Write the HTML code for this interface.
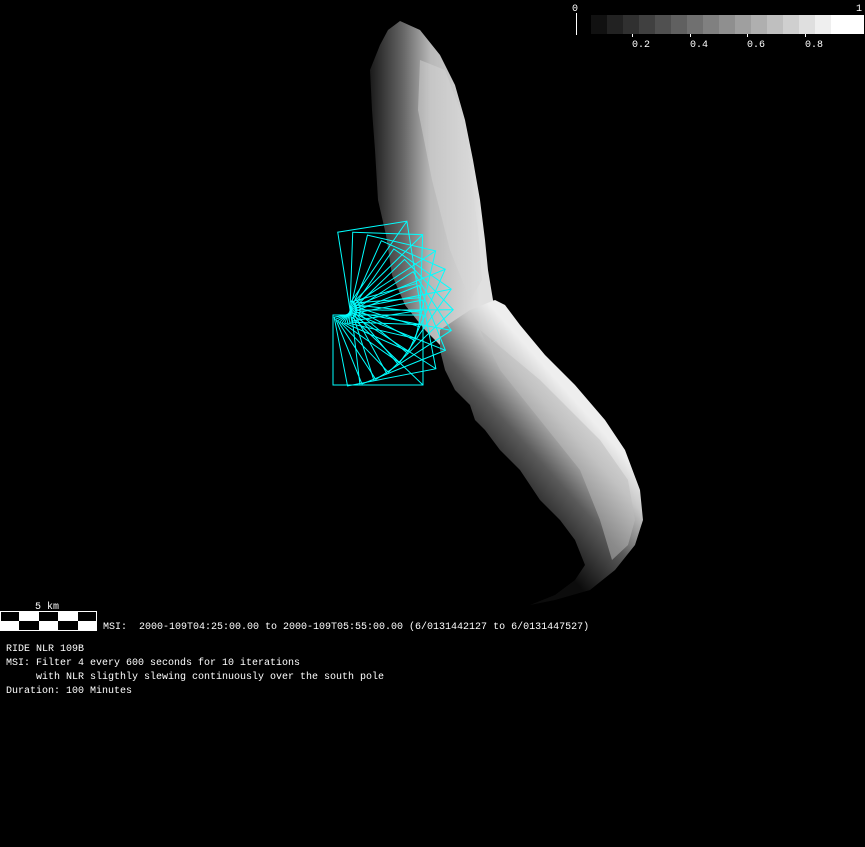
<!DOCTYPE html>
<html><head><meta charset="utf-8"><style>
html,body{margin:0;padding:0;background:#000;width:865px;height:847px;overflow:hidden}
svg{display:block}
text{font-family:"Liberation Mono","DejaVu Sans Mono",monospace;fill:#fff;font-size:10px;white-space:pre}
</style></head><body>
<svg width="865" height="847" viewBox="0 0 865 847" xmlns="http://www.w3.org/2000/svg" xml:space="preserve">
<defs>
<linearGradient id="gu" x1="370" y1="0" x2="480" y2="0" gradientUnits="userSpaceOnUse">
<stop offset="0" stop-color="#1a1a1a"/><stop offset="0.3" stop-color="#666"/><stop offset="0.55" stop-color="#b8b8b8"/><stop offset="1" stop-color="#e0e0e0"/>
</linearGradient>
<linearGradient id="gl" x1="520" y1="520" x2="610" y2="440" gradientUnits="userSpaceOnUse">
<stop offset="0" stop-color="#0c0c0c"/><stop offset="0.45" stop-color="#5a5a5a"/><stop offset="0.8" stop-color="#c8c8c8"/><stop offset="1" stop-color="#eee"/>
</linearGradient>
</defs>
<rect width="865" height="847" fill="#000"/>
<path d="M400,21 L420,30 L440,55 L455,85 L465,120 L473,160 L480,200 L485,240 L488,270 L493,300 L500,310 L470,330 L440,345 L425,330 L405,305 L392,275 L386,235 L378,200 L375,150 L372,110 L370,70 L380,45 L388,30 Z" fill="url(#gu)"/>
<path d="M440,330 L470,310 L495,300 L505,305 L520,325 L545,355 L575,385 L605,420 L625,450 L640,490 L643,520 L635,545 L615,570 L590,590 L555,600 L530,605 L555,595 L575,580 L585,565 L575,540 L560,520 L540,500 L520,470 L500,450 L485,430 L475,420 L470,405 L455,390 L445,370 L440,350 Z" fill="url(#gl)"/>
<path d="M480,330 L540,380 L600,440 L628,480 L635,520 L628,545 L612,560 L600,520 L580,470 L540,420 L500,370 Z" fill="#bcbcbc" opacity="0.5"/>
<path d="M420,60 L445,70 L460,110 L470,170 L478,230 L482,280 L470,300 L450,250 L432,180 L418,110 Z" fill="#d6d6d6" opacity="0.45"/>
<g fill="none" stroke="#00ffff" stroke-width="1">
<g transform="translate(345,310)">
<g id="r0"><rect x="-12" y="5" width="90" height="70"/><line x1="7" y1="7" x2="78" y2="75"/><line x1="7" y1="7" x2="15" y2="75"/></g>
<use href="#r0" transform="rotate(-11)"/>
<use href="#r0" transform="rotate(-22)"/>
<use href="#r0" transform="rotate(-33)"/>
<use href="#r0" transform="rotate(-44)"/>
<use href="#r0" transform="rotate(-55)"/>
<use href="#r0" transform="rotate(-66)"/>
<use href="#r0" transform="rotate(-77)"/>
<use href="#r0" transform="rotate(-88)"/>
<use href="#r0" transform="rotate(-99)"/>
</g>
</g>
<text x="572" y="11">0</text>
<line x1="576.5" y1="13" x2="576.5" y2="35" stroke="#fff"/>
<text x="856" y="11">1</text>
<g>
<rect x="591" y="15" width="16" height="19" fill="#111"/>
<rect x="607" y="15" width="16" height="19" fill="#222"/>
<rect x="623" y="15" width="16" height="19" fill="#303030"/>
<rect x="639" y="15" width="16" height="19" fill="#404040"/>
<rect x="655" y="15" width="16" height="19" fill="#505050"/>
<rect x="671" y="15" width="16" height="19" fill="#606060"/>
<rect x="687" y="15" width="16" height="19" fill="#707070"/>
<rect x="703" y="15" width="16" height="19" fill="#808080"/>
<rect x="719" y="15" width="16" height="19" fill="#8f8f8f"/>
<rect x="735" y="15" width="16" height="19" fill="#9f9f9f"/>
<rect x="751" y="15" width="16" height="19" fill="#afafaf"/>
<rect x="767" y="15" width="16" height="19" fill="#bfbfbf"/>
<rect x="783" y="15" width="16" height="19" fill="#cfcfcf"/>
<rect x="799" y="15" width="16" height="19" fill="#dfdfdf"/>
<rect x="815" y="15" width="16" height="19" fill="#efefef"/>
<rect x="831" y="15" width="33" height="19" fill="#fff"/>
</g>
<g stroke="#fff"><line x1="632.5" y1="34" x2="632.5" y2="37"/><line x1="690.5" y1="34" x2="690.5" y2="37"/><line x1="747.5" y1="34" x2="747.5" y2="37"/><line x1="805.5" y1="34" x2="805.5" y2="37"/></g>
<text x="632" y="47">0.2</text><text x="690" y="47">0.4</text><text x="747" y="47">0.6</text><text x="805" y="47">0.8</text>
<text x="35" y="609">5 km</text>
<rect x="0" y="611" width="97" height="20" fill="#fff"/>
<rect x="1" y="612" width="18" height="9" fill="#000"/>
<rect x="39" y="612" width="19" height="9" fill="#000"/>
<rect x="78" y="612" width="18" height="9" fill="#000"/>
<rect x="19" y="621" width="20" height="9" fill="#000"/>
<rect x="58" y="621" width="20" height="9" fill="#000"/>
<text x="103" y="629">MSI:  2000-109T04:25:00.00 to 2000-109T05:55:00.00 (6/0131442127 to 6/0131447527)</text>
<text x="6" y="651">RIDE NLR 109B</text>
<text x="6" y="665">MSI: Filter 4 every 600 seconds for 10 iterations</text>
<text x="36" y="679">with NLR sligthly slewing continuously over the south pole</text>
<text x="6" y="693">Duration: 100 Minutes</text>
</svg>
</body></html>
